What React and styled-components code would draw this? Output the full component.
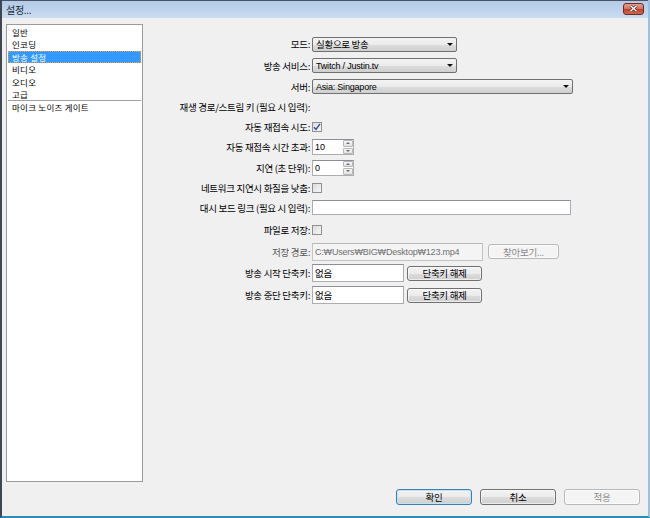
import React from 'react';
import styled, { createGlobalStyle } from 'styled-components';

const KR = `"Noto Sans CJK KR", "Liberation Sans", sans-serif`;
const LATIN = `"Liberation Sans", "Noto Sans CJK KR", sans-serif`;

const GlobalStyle = createGlobalStyle`
  html, body {
    margin: 0;
    padding: 0;
    background: #f0f0f0;
  }
  body {
    font-family: ${KR};
    color: #000;
  }
`;

const Window = styled.div`
  width: 650px;
  height: 518px;
  box-sizing: border-box;
  display: flex;
  flex-direction: column;
  border-left: 2px solid #3f4852;
  border-right: 2px solid #9cc0e2;
  border-bottom: 2px solid #2b8db5;
  background: #f0f0f0;
  overflow: hidden;
`;

const TitleBar = styled.div`
  height: 18px;
  flex: none;
  display: flex;
  align-items: center;
  justify-content: space-between;
  padding: 0 4px 0 4px;
  border-top: 1px solid #4a5562;
  box-sizing: border-box;
  background: linear-gradient(#b3cbe8 0%, #bdd3ec 50%, #cadcf0 100%);
`;

const Title = styled.span`
  font-size: 10px;
  letter-spacing: -0.3px;
  color: #1e2a38;
`;

const CloseButton = styled.div`
  width: 21px;
  height: 12px;
  margin-top: -2px;
  box-sizing: border-box;
  border: 1px solid #6b2a22;
  border-radius: 3px;
  background: linear-gradient(#e3a08f 0%, #d6735f 45%, #c2402b 55%, #d06a48 100%);
  display: flex;
  align-items: center;
  justify-content: center;
`;

const Body = styled.div`
  flex: 1;
  display: flex;
  flex-direction: column;
  padding: 6px 8px 0 4px;
`;

const Main = styled.div`
  display: flex;
  height: 458px;
`;

const Sidebar = styled.div`
  width: 137px;
  box-sizing: border-box;
  border: 1px solid #9a9a9a;
  background: #fff;
  padding: 1px 0;
`;

const SideItem = styled.div`
  height: 12.4px;
  line-height: 12.4px;
  margin: 0 1px;
  padding-left: 4px;
  font-size: 8.5px;
  letter-spacing: 0.25px;
  white-space: nowrap;
  box-sizing: border-box;
  overflow: hidden;
  color: ${({ $active }) => ($active ? '#fff' : '#000')};
  background: ${({ $active }) => ($active ? '#3399ff' : 'transparent')};
  outline: ${({ $active }) => ($active ? '1px dotted #e8a050' : 'none')};
  outline-offset: -1px;
  border-top: ${({ $separated }) => ($separated ? '1px solid #a0a0a0' : 'none')};
`;

const Form = styled.div`
  margin-left: 7px;
  padding-top: 9px;
  display: grid;
  grid-template-columns: 160px auto;
  grid-template-rows: 22px 21px 21px 20px 20px 20px 21px 19px 21px 23px 21px 22px 22px;
  column-gap: 2px;
  align-content: start;
  align-items: center;
`;

const Label = styled.div`
  grid-column: 1;
  justify-self: end;
  font-size: 9.5px;
  letter-spacing: -0.3px;
  white-space: nowrap;
  color: ${({ $disabled }) => ($disabled ? '#555' : '#000')};
`;

const Cell = styled.div`
  grid-column: 2;
  display: flex;
  align-items: center;
  gap: ${({ $gap }) => $gap || 3}px;
`;

const Combo = styled.div`
  width: ${({ $w }) => $w}px;
  height: 15px;
  box-sizing: border-box;
  border: 1px solid #707070;
  border-radius: 2px;
  background: linear-gradient(#f3f3f3 0%, #ebebeb 50%, #dddddd 51%, #cfcfcf 100%);
  display: flex;
  align-items: center;
  justify-content: space-between;
  padding: 0 3px 0 3px;
  font-family: ${({ $latin }) => ($latin ? LATIN : KR)};
  font-size: ${({ $latin }) => ($latin ? '9px' : '9.5px')};
  letter-spacing: ${({ $latin }) => ($latin ? '-0.2px' : '-0.3px')};
  white-space: nowrap;
`;

const Arrow = styled.span`
  width: 0;
  height: 0;
  border-left: 3px solid transparent;
  border-right: 3px solid transparent;
  border-top: 3px solid #111;
`;

const Check = styled.div`
  width: 10px;
  height: 10px;
  box-sizing: border-box;
  border: 1px solid #8e8f8f;
  background: linear-gradient(135deg, #dcdcdc 0%, #f6f6f6 100%);
  display: flex;
  align-items: center;
  justify-content: center;
`;

const TextBox = styled.div`
  width: ${({ $w }) => $w}px;
  height: ${({ $h }) => $h || 17}px;
  box-sizing: border-box;
  border: 1px solid ${({ $disabled }) => ($disabled ? '#c4c4c4' : '#abadb3')};
  border-top-color: ${({ $disabled }) => ($disabled ? '#b8b8b8' : '#8c8f98')};
  background: ${({ $disabled }) => ($disabled ? '#f4f4f4' : '#fff')};
  color: ${({ $disabled }) => ($disabled ? '#707070' : '#000')};
  display: flex;
  align-items: center;
  padding-left: 2px;
  font-family: ${({ $latin }) => ($latin ? LATIN : KR)};
  font-size: ${({ $latin }) => ($latin ? '9px' : '9.5px')};
  letter-spacing: ${({ $latin }) => ($latin ? '-0.2px' : '-0.3px')};
  white-space: nowrap;
  overflow: hidden;
`;

const Spin = styled.div`
  width: 42px;
  height: 16px;
  box-sizing: border-box;
  border: 1px solid #abadb3;
  border-top-color: #8c8f98;
  background: #fff;
  display: flex;
`;

const SpinValue = styled.div`
  flex: 1;
  padding-left: 2px;
  display: flex;
  align-items: center;
  font-family: ${LATIN};
  font-size: 9px;
`;

const SpinButtons = styled.div`
  width: 10px;
  display: flex;
  flex-direction: column;
  gap: 1px;
`;

const SpinButton = styled.div`
  flex: 1;
  box-sizing: border-box;
  border: 1px solid #b7b7b7;
  border-radius: 1px;
  background: linear-gradient(#f6f6f6, #e2e2e2);
  display: flex;
  align-items: center;
  justify-content: center;
`;

const Tri = styled.span`
  width: 0;
  height: 0;
  border-left: 2px solid transparent;
  border-right: 2px solid transparent;
  ${({ $up }) => ($up ? 'border-bottom: 2px solid #6a6a6a;' : 'border-top: 2px solid #6a6a6a;')}
`;

const Button = styled.div`
  width: ${({ $w }) => $w}px;
  height: ${({ $h }) => $h || 15}px;
  box-sizing: border-box;
  border: 1px solid ${({ $disabled, $focused }) => ($disabled ? '#b5b9bc' : $focused ? '#3c7fb1' : '#707070')};
  border-radius: 3px;
  background: ${({ $disabled }) =>
    $disabled ? '#f4f4f4' : 'linear-gradient(#f2f2f2 0%, #ebebeb 50%, #dddddd 51%, #cfcfcf 100%)'};
  box-shadow: ${({ $focused }) => ($focused ? 'inset 0 0 0 1px #bfe4f8' : 'inset 0 0 0 1px rgba(255,255,255,0.6)')};
  color: ${({ $disabled }) => ($disabled ? '#8a8a8a' : '#000')};
  display: flex;
  align-items: center;
  justify-content: center;
  font-size: 9.5px;
  letter-spacing: -0.3px;
  white-space: nowrap;
`;

const Footer = styled.div`
  display: flex;
  justify-content: flex-end;
  gap: 8px;
  margin-top: 7px;
`;

function CheckMark() {
  return (
    <svg width="8" height="8" viewBox="0 0 8 8">
      <path d="M1 4.2 L3 6.4 L7 0.8" fill="none" stroke="#2e4a8c" strokeWidth="1.3" />
    </svg>
  );
}

function SpinBox({ value }) {
  return (
    <Spin>
      <SpinValue>{value}</SpinValue>
      <SpinButtons>
        <SpinButton><Tri $up /></SpinButton>
        <SpinButton><Tri /></SpinButton>
      </SpinButtons>
    </Spin>
  );
}

const menu = ['일반', '인코딩', '방송 설정', '비디오', '오디오', '고급'];

export default function App() {
  return (
    <>
      <GlobalStyle />
      <Window>
        <TitleBar>
          <Title>설정...</Title>
          <CloseButton>
            <svg width="9" height="7" viewBox="0 0 9 7">
              <path d="M1.5 0.8 L7.5 6.2 M7.5 0.8 L1.5 6.2" stroke="#4a1a14" strokeWidth="2.6" />
              <path d="M1.5 0.8 L7.5 6.2 M7.5 0.8 L1.5 6.2" stroke="#fff" strokeWidth="1.5" />
            </svg>
          </CloseButton>
        </TitleBar>
        <Body>
          <Main>
            <Sidebar>
              {menu.map((m) => (
                <SideItem key={m} $active={m === '방송 설정'}>{m}</SideItem>
              ))}
              <SideItem $separated>마이크 노이즈 게이트</SideItem>
            </Sidebar>

            <Form>
              <Label>모드:</Label>
              <Cell>
                <Combo $w={145}>실황으로 방송<Arrow /></Combo>
              </Cell>

              <Label>방송 서비스:</Label>
              <Cell>
                <Combo $w={145} $latin>Twitch / Justin.tv<Arrow /></Combo>
              </Cell>

              <Label>서버:</Label>
              <Cell>
                <Combo $w={261} $latin>Asia: Singapore<Arrow /></Combo>
              </Cell>

              <Label>재생 경로/스트림 키 (필요 시 입력):</Label>
              <Cell />

              <Label>자동 재접속 시도:</Label>
              <Cell>
                <Check><CheckMark /></Check>
              </Cell>

              <Label>자동 재접속 시간 초과:</Label>
              <Cell>
                <SpinBox value="10" />
              </Cell>

              <Label>지연 (초 단위):</Label>
              <Cell>
                <SpinBox value="0" />
              </Cell>

              <Label>네트워크 지연시 화질을 낮춤:</Label>
              <Cell>
                <Check />
              </Cell>

              <Label>대시 보드 링크 (필요 시 입력):</Label>
              <Cell>
                <TextBox $w={259} $h={15} />
              </Cell>

              <Label>파일로 저장:</Label>
              <Cell>
                <Check />
              </Cell>

              <Label $disabled>저장 경로:</Label>
              <Cell $gap={5}>
                <TextBox $w={171} $h={18} $disabled $latin>C:₩Users₩BIG₩Desktop₩123.mp4</TextBox>
                <Button $w={71} $disabled>찾아보기...</Button>
              </Cell>

              <Label>방송 시작 단축키:</Label>
              <Cell>
                <TextBox $w={92} $h={18}>없음</TextBox>
                <Button $w={75}>단축키 해제</Button>
              </Cell>

              <Label>방송 중단 단축키:</Label>
              <Cell>
                <TextBox $w={92} $h={18}>없음</TextBox>
                <Button $w={75}>단축키 해제</Button>
              </Cell>
            </Form>
          </Main>

          <Footer>
            <Button $w={76} $h={16} $focused>확인</Button>
            <Button $w={76} $h={16}>취소</Button>
            <Button $w={76} $h={16} $disabled>적용</Button>
          </Footer>
        </Body>
      </Window>
    </>
  );
}
